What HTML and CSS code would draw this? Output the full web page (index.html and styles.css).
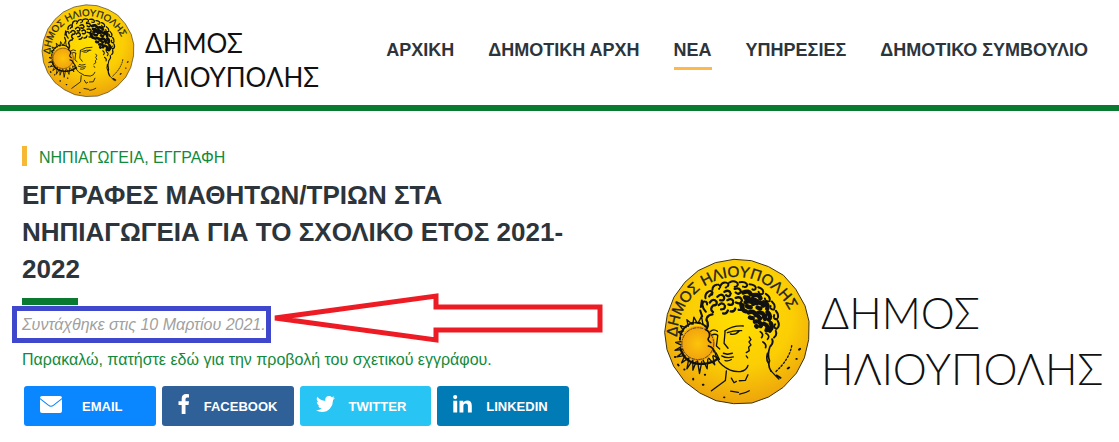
FILE: index.html
```html
<!DOCTYPE html>
<html lang="el">
<head>
  <meta charset="UTF-8" />
  <meta name="viewport" content="width=device-width, initial-scale=1.0" />
  <title>Δήμος Ηλιούπολης</title>
  <link rel="stylesheet" href="styles.css">
</head>
<body>

  <header class="site-header">
    <a class="logo" href="#">
      <svg class="coin" viewBox="22 24 446 446"><use href="#coin" /></svg>
      <span class="logo-text">ΔΗΜΟΣ<br>ΗΛΙΟΥΠΟΛΗΣ</span>
    </a>
    <nav class="menu">
      <a href="#">ΑΡΧΙΚΗ</a>
      <a href="#">ΔΗΜΟΤΙΚΗ ΑΡΧΗ</a>
      <a href="#" class="active">ΝΕΑ</a>
      <a href="#">ΥΠΗΡΕΣΙΕΣ</a>
      <a href="#">ΔΗΜΟΤΙΚΟ ΣΥΜΒΟΥΛΙΟ</a>
    </nav>
  </header>

  <main class="content">
    <article class="post">
      <div class="category"><a href="#">ΝΗΠΙΑΓΩΓΕΙΑ, ΕΓΓΡΑΦΗ</a></div>
      <h1>ΕΓΓΡΑΦΕΣ ΜΑΘΗΤΩΝ/ΤΡΙΩΝ ΣΤΑ ΝΗΠΙΑΓΩΓΕΙΑ ΓΙΑ ΤΟ ΣΧΟΛΙΚΟ ΕΤΟΣ 2021-2022</h1>
      <div class="date-row">
        <p class="date">Συντάχθηκε στις 10 Μαρτίου 2021.</p>
        <svg class="arrow" viewBox="0 0 334 50">
          <path d="M4 25 L165 3 V14 H329 V37 H165 V47 Z" />
        </svg>
      </div>
      <p class="text"><a href="#">Παρακαλώ, πατήστε εδώ για την προβολή του σχετικού εγγράφου.</a></p>

      <div class="share">
        <button class="email">
          <svg width="22" height="17" viewBox="0 0 22 17"><path d="M2 0 H20 Q22 0 22 2 L13 9 Q11 10.500 9 9 L0 2 Q0 0 2 0 Z M0 3.300 L8 9.600 Q11 12 14 9.600 L22 3.300 V15 Q22 17 20 17 H2 Q0 17 0 15 Z" /></svg>
          <span>EMAIL</span>
        </button>
        <button class="facebook">
          <svg width="12" height="20" viewBox="0 0 12 20"><path d="M11 0.200 V3.400 H9.200 Q7.500 3.400 7.500 5 V7.300 H11 L10.500 10.900 H7.500 V20 H3.700 V10.900 H0.500 V7.300 H3.700 V4.600 Q3.700 0 8.300 0 Z" /></svg>
          <span>FACEBOOK</span>
        </button>
        <button class="twitter">
          <svg width="19" height="16" viewBox="0 0 19 16"><path d="M19 2 Q18.200 3.200 17 4 Q17.200 9 14 12.500 Q11 16 6 16 Q2.700 16 0 14.200 Q3.200 14.500 5.700 12.500 Q3 12.300 2.100 9.800 H3.800 Q0.900 8.800 0.800 5.800 L2.500 6.300 Q-0.300 4 1.300 0.800 Q4.500 4.700 9.400 4.900 Q8.700 2 10.800 0.600 Q13.500 -0.900 15.800 1.200 L18.300 0.300 Q17.900 1.700 16.700 2.500 Z" /></svg>
          <span>TWITTER</span>
        </button>
        <button class="linkedin">
          <svg width="19" height="18" viewBox="0 0 19 18"><path d="M0.300 5.800 H4.200 V17.500 H0.300 Z M2.200 0 A2.100 2.100 0 1 1 2.200 4.200 A2.100 2.100 0 1 1 2.200 0 Z M6.500 5.800 H10.300 V7.500 Q11.600 5.500 14.200 5.500 Q18.800 5.500 18.800 10.800 V17.500 H14.900 V11.300 Q14.900 8.600 12.800 8.600 Q10.400 8.600 10.400 11.300 V17.500 H6.500 Z" /></svg>
          <span>LINKEDIN</span>
        </button>
      </div>
    </article>

    <div class="logo logo-big">
      <svg class="coin" viewBox="22 24 446 446">
        <defs>
          <radialGradient id="gold" cx="52%" cy="38%" r="62%">
            <stop offset="0" stop-color="#ffe000" />
            <stop offset="0.6" stop-color="#fbcd05" />
            <stop offset="1" stop-color="#eda40c" />
          </radialGradient>
          <radialGradient id="sun">
            <stop offset="0" stop-color="#fdc408" />
            <stop offset="1" stop-color="#f0a010" />
          </radialGradient>
          <path id="rim" d="M65 262 A178 180 0 1 1 420 280" />
        </defs>
        <g id="coin">
          <path fill="url(#gold)" stroke="#3a3010" stroke-width="3" d="M236 28 L288 32 L340 50 L385 76 L422 118 L450 168 L462 215 L461 270 L448 325 L424 371 L384 414 L340 443 L290 461 L235 463 L182 454 L133 431 L88 397 L54 350 L34 300 L27 248 L35 194 L55 142 L88 97 L128 62 L180 38 Z" />
          <text class="coin-text"><textPath href="#rim">ΔΗΜΟΣ ΗΛΙΟΥΠΟΛΗΣ</textPath></text>
          <circle cx="127" cy="282" r="53" fill="url(#sun)" />
          <g fill="none" stroke="#111" stroke-linecap="round" stroke-linejoin="round">
            <!-- sun rays -->
            <circle cx="127" cy="282" r="48" stroke-width="2" stroke-dasharray="9 5 3 4" />
            <path stroke-width="4" d="M80 255 l-12 -8 l13 -3 M84 244 l-10 -16 l17 6 M98 230 l-4 -20 l14 12 M112 224 l3 -22 l10 18 M128 220 l10 -20 l4 22 M76 276 l-16 2 l16 8 M76 292 l-18 10 l22 -2 M82 308 l-18 14 l22 -4 M88 318 l-10 22 l20 -14 M100 326 l-6 32 l16 -24 M112 332 l0 30 l10 -26 M126 334 l6 38 l7 -36 M143 332 l12 26 l2 -29 M160 326 l18 20 l-6 -26 M174 318 l18 12 l-10 -20" />
            <path stroke-width="7" stroke-dasharray="12 3 6 4" d="M75 298 Q90 345 140 343 Q170 342 190 325" />
            <path stroke-width="6" stroke-dasharray="7 6 3 5" d="M73 270 Q75 232 110 220 Q138 214 156 236" />
            <!-- loose dots round the rays -->
            <path stroke-width="6" d="M58 322 h1 M67 345 l2 3 M86 360 h1 M113 388 v2 M142 406 h2 M148 376 h1 M206 444 h1 M432 300 l3 -2 M424 328 h1 M398 357 l4 -3 M376 385 l-12 -7" />
            <!-- hair -->
            <path stroke-width="6" stroke-dasharray="22 4 11 5" d="M151 186 q-14 -14 -8 -30 q12 -4 12 8 M150 145 q-3 -16 14 -22 q12 3 5 12 M171 120 q0 -15 17 -16 q11 4 3 13 M195 108 q6 -14 20 -9 q10 7 -4 14 M222 98 q13 -8 24 1 q5 10 -8 12 M253 97 q18 -3 23 8 q-2 10 -13 5 M283 103 q17 1 19 12 q-4 9 -14 1 M309 112 q17 5 15 18 q-8 8 -14 -4 M332 132 q15 9 11 22 q-10 4 -14 -8 M350 155 q13 12 6 24 q-11 2 -10 -10 M362 183 q12 14 3 26 q-12 -1 -8 -13 M368 214 q8 16 -5 24 q-10 -6 -3 -14 M362 244 q5 15 -8 21 M351 269 q5 13 -7 22 M140 200 l-6 -18 M136 172 l3 -20 M161 140 l10 -12" />
            <path stroke-width="7" stroke-dasharray="19 4 9 3" d="M163 158 q10 -14 20 -3 q4 12 -10 12 q-12 12 1 21 M186 141 q12 -13 20 0 q2 14 -12 10 M190 166 q9 -11 18 0 q3 13 -11 13 M207 126 q14 -9 19 5 q-4 14 -14 5 M216 151 q13 -8 18 4 q-1 14 -15 9 M203 191 q11 3 15 -10 M226 185 q14 2 14 -13 M238 117 q15 -5 19 8 q-6 12 -16 3 M241 144 q15 -6 19 8 q-5 14 -18 6 M250 180 q16 3 15 -16 M171 194 q-17 2 -18 17 q8 12 1 25" />
            <path stroke-width="13" stroke-dasharray="26 14 12 13" d="M264 128 q17 -8 23 6 q-5 14 -18 8 q9 13 23 5 M294 136 q18 -4 22 10 q-8 13 -17 4 M271 157 q17 -8 24 7 q-7 14 -20 5 M302 160 q17 -6 23 8 q-6 13 -18 5 M326 157 q15 6 10 20 M280 188 q16 -6 22 8 q-5 14 -18 7 M308 189 q18 -3 19 13 q-9 10 -17 -1 M337 187 q14 12 2 25 q-14 0 -9 -14 M299 216 q17 -4 18 12 q-8 10 -14 1 M326 222 q16 5 8 20 M347 221 q7 11 -3 22 M258 165 q3 18 14 20" />
            <path stroke-width="5" d="M315 246 q12 8 4 18 M332 251 q14 7 5 18 M323 277 q12 7 8 17 M344 292 q-8 22 -1 42 q-6 15 5 31 M337 311 q-5 19 2 29 M151 240 q15 7 10 22 q-8 9 5 17 M159 289 q16 4 17 18" />
            <!-- face -->
            <path stroke-width="4" d="M164 246 q10 -10 22 -1 M169 256 q10 -5 18 1 M208 244 q24 -17 56 -15 M216 249 q22 -8 43 -6 M209 246 l-3 35 l12 15 M187 258 l-4 31 l10 9 M225 253 q15 4 27 -9 M199 319 q15 9 35 3 M204 311 l12 3 l15 -3 M209 333 q10 3 19 -3 M178 304 q4 28 23 43 q26 22 55 19 q18 -3 22 -18" />
            <path stroke-width="4" d="M282 262 l5 8 l-6 7 l6 9 l-7 7 l2 10 l-9 6 M273 319 l4 6 M213 364 l-3 29 l-42 31 M228 386 l8 14 l7 -4 M252 394 l18 -1 l8 -17 M226 425 l23 4 M253 434 q16 -2 29 -10 M348 365 l23 24" />
            <path stroke-width="4" stroke-dasharray="5 6" d="M410 288 Q403 330 358 370" />
          </g>
        </g>
      </svg>
      <span class="logo-text">ΔΗΜΟΣ<br>ΗΛΙΟΥΠΟΛΗΣ</span>
    </div>
  </main>

</body>
</html>
```
FILE: styles.css
```css
:root {
  --green: #0a7a30;
  --link: #128a3c;
  --dark: #2d353c;
  --yellow: #ffb94a;
}

* {
  box-sizing: border-box;
}

body {
  margin: 0;
  font-family: "Liberation Sans", Arial, sans-serif;
  background-color: #fff;
  color: var(--dark);
}

a {
  color: inherit;
  text-decoration: none;
}

.site-header {
  display: flex;
  justify-content: space-between;
  align-items: center;
  padding: 4px 31px 7px 41px;
  border-bottom: 6px solid var(--green);
}

/* logo */
.logo {
  display: flex;
  align-items: center;
  gap: 10px;
  color: #111;
}

.coin {
  display: block;
  flex: none;
  width: 94px;
  height: 94px;
}

.coin-text {
  font-family: "Liberation Sans", Arial, sans-serif;
  font-size: 46px;
  fill: #222;
  stroke: #222;
  stroke-width: 1px;
}

.logo-text {
  padding-top: 18px;
  font-family: Lato, sans-serif;
  font-size: 26px;
  font-weight: 400;
  line-height: 34px;
  white-space: nowrap;
}

.logo-big .coin {
  width: 148px;
  height: 148px;
}

.logo-big .logo-text {
  font-size: 43px;
  font-weight: 300;
  line-height: 56px;
}

/* menu */
.menu {
  display: flex;
  gap: 34px;
  padding-top: 6px;
  font-size: 18px;
  font-weight: bold;
  line-height: 22px;
}

.menu a {
  padding-bottom: 6px;
  border-bottom: 3px solid transparent;
  white-space: nowrap;
}

.menu a.active {
  border-color: var(--yellow);
}

/* article */
.content {
  display: grid;
  grid-template-columns: minmax(0, 547fr) minmax(0, 444fr);
  gap: 94px;
  align-items: end;
  padding: 35px 12px 16px 22px;
}

.category {
  padding: 4px 0 0 12px;
  border-left: 5px solid #f6b935;
  font-size: 16px;
  line-height: 16px;
  color: var(--link);
}

h1 {
  margin: 11px 0 0;
  font-size: 26px;
  line-height: 37px;
}

h1::after {
  content: "";
  display: block;
  width: 56px;
  height: 7px;
  margin-top: 10px;
  background-color: var(--green);
}

.date-row {
  position: relative;
  display: flex;
  margin: 1px 0 0 -10px;
}

.date {
  margin: 0;
  padding: 4px 0 3px 5px;
  border: 5px solid #3f48cc;
  font-size: 16px;
  font-style: italic;
  line-height: 20px;
  color: #a0a0a0;
}

.arrow {
  position: absolute;
  left: 259px;
  top: -13px;
  width: 334px;
  height: 50px;
  fill: none;
  stroke: #ed1c24;
  stroke-width: 5;
}

.text {
  margin: 7px 0 16px;
  font-size: 16px;
  line-height: 20px;
  color: var(--link);
}

/* share buttons */
.share {
  display: grid;
  grid-template-columns: repeat(4, minmax(0, 1fr));
  gap: 6px;
  margin-left: 2px;
}

.share button {
  display: flex;
  align-items: center;
  gap: 14px;
  height: 40px;
  padding: 0 16px;
  border: none;
  border-radius: 3px;
  color: #fff;
  font-family: inherit;
  font-size: 13px;
  font-weight: bold;
  cursor: pointer;
}

.share svg {
  flex: none;
  margin-bottom: 4px;
  fill: #fff;
}

.share .email {
  gap: 20px;
  background-color: #0a86ff;
}

.facebook {
  background-color: #2f6098;
}

.twitter {
  background-color: #27c4f4;
}

.linkedin {
  background-color: #007bb6;
}

.share button:hover {
  opacity: 0.9;
}

.logo-big {
  margin-bottom: 20px;
}

@media (max-width: 900px) {
  .site-header {
    flex-direction: column;
  }

  .menu {
    flex-wrap: wrap;
    justify-content: center;
  }

  .content {
    grid-template-columns: 1fr;
  }
}
```
